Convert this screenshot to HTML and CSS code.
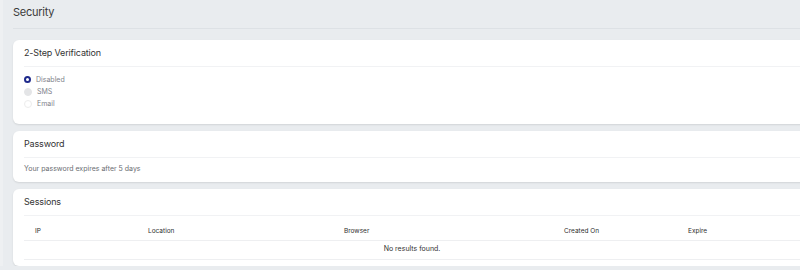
FILE: index.html
```html
<!DOCTYPE html>
<html>
<head>
  <title>Security</title>
  <link rel="stylesheet" href="styles.css">
</head>
<body>
  <div class="page">
    <h1 class="page-title">Security</h1>

    <div class="card">
      <div class="card-header">2-Step Verification</div>
      <div class="card-body radios">
        <label class="radio"><span class="dot checked"></span>Disabled</label>
        <label class="radio"><span class="dot muted"></span>SMS</label>
        <label class="radio"><span class="dot"></span>Email</label>
      </div>
    </div>

    <div class="card">
      <div class="card-header">Password</div>
      <div class="card-body note">Your password expires after 5 days</div>
    </div>

    <div class="card">
      <div class="card-header">Sessions</div>
      <div class="table">
        <div class="row head">
          <span>IP</span>
          <span>Location</span>
          <span>Browser</span>
          <span>Created On</span>
          <span>Expire</span>
        </div>
        <div class="empty">No results found.</div>
      </div>
    </div>
  </div>
</body>
</html>
```

FILE: styles.css
```css
body {
  margin: 0;
  background: #e9ecef;
  font-family: Inter, "Noto Sans", sans-serif;
  color: #333;
  overflow: hidden;
  border-left: 3px solid #eef0f2;
}

.page {
  width: 798px;
  padding: 0 0 0 10px;
}

.page-title {
  margin: 0;
  padding: 6px 0 9px;
  font-size: 11px;
  line-height: 13px;
  letter-spacing: -0.25px;
  font-weight: 400;
  color: #3a3a3a;
  border-bottom: 1px solid #dde1e5;
}

.card {
  background: #fff;
  border-radius: 6px;
  margin-top: 11px;
  box-shadow: 0 1px 2px rgba(0, 0, 0, 0.1);
}

.card + .card {
  margin-top: 7px;
}

.card-header {
  margin: 0 11px;
  padding: 7px 0 8px;
  font-size: 9px;
  line-height: 11px;
  letter-spacing: -0.15px;
  color: #333;
  border-bottom: 1px solid #f1f2f4;
}

.card-body {
  padding: 0 11px;
}

.radios {
  display: flex;
  flex-direction: column;
  gap: 3px;
  padding-top: 8px;
  padding-bottom: 16px;
}

.radio {
  display: flex;
  align-items: center;
  gap: 5px;
  font-size: 7px;
  line-height: 9px;
  color: #7f838c;
  height: 9px;
}

.dot {
  width: 6px;
  height: 6px;
  border-radius: 50%;
  border: 1px solid #ececec;
  background: #fff;
}

.dot.muted {
  background: #e4e5e7;
  border-color: #e4e5e7;
}

.dot.checked {
  width: 3px;
  height: 3px;
  border: 2.5px solid #1f2a8c;
  background: #fff;
}

.note {
  padding-top: 7px;
  padding-bottom: 9px;
  font-size: 7px;
  line-height: 8px;
  color: #6a6d72;
}

.table {
  margin: 0 0 0 11px;
  width: 776px;
  font-size: 6.5px;
  line-height: 8px;
  padding-bottom: 6px;
}

.row {
  display: grid;
  grid-template-columns: 113px 196px 220px 124px 1fr;
}

.row span {
  padding: 11px 11px 5px;
}

.head {
  color: #2e2e2e;
  border-bottom: 1px solid #eeeff1;
}

.empty {
  text-align: center;
  padding: 4px 0 6px;
  color: #333;
  border-bottom: 1px solid #eeeff1;
  font-size: 7px;
}
```
